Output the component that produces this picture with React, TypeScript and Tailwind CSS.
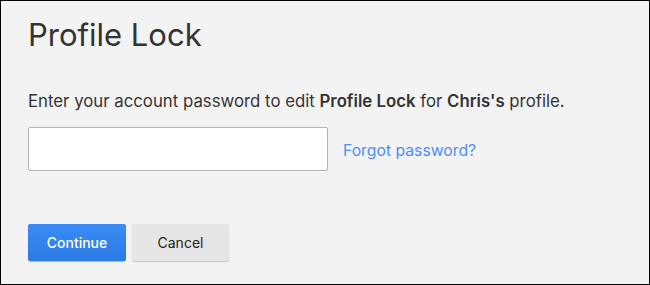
export default function App() {
  return (
    <div className="h-[285px] w-[650px] overflow-hidden border border-black bg-[#f3f3f3] font-['Inter',sans-serif] text-[#333]">
      <div className="pl-[27px] pt-[14px]">
        <h1 className="text-[31px] leading-[40px] font-normal">Profile Lock</h1>
        <p className="mt-[34px] text-[16.8px] leading-[24px]">
          Enter your account password to edit <b className="font-semibold">Profile Lock</b> for{" "}
          <b className="font-semibold">Chris's</b> profile.
        </p>
        <div className="mt-[14px] flex items-center">
          <input
            type="password"
            className="h-[44px] w-[300px] rounded-[2px] border border-[#b3b3b3] bg-white"
          />
          <a className="ml-[15px] pt-[3px] text-[15.75px] text-[#4f8ef7]">Forgot password?</a>
        </div>
        <div className="mt-[53px] flex gap-[6px]">
          <button className="h-[37px] w-[98px] rounded-[2px] bg-gradient-to-b from-[#3a8bf5] to-[#2c7be5] text-[14px] font-medium text-white shadow-[0_1px_1px_rgba(0,0,0,0.25)]">
            Continue
          </button>
          <button className="h-[37px] w-[97px] rounded-[2px] bg-[#e6e6e6] text-[14px] text-[#222] shadow-[0_1px_1px_rgba(0,0,0,0.2)]">
            Cancel
          </button>
        </div>
      </div>
    </div>
  );
}
